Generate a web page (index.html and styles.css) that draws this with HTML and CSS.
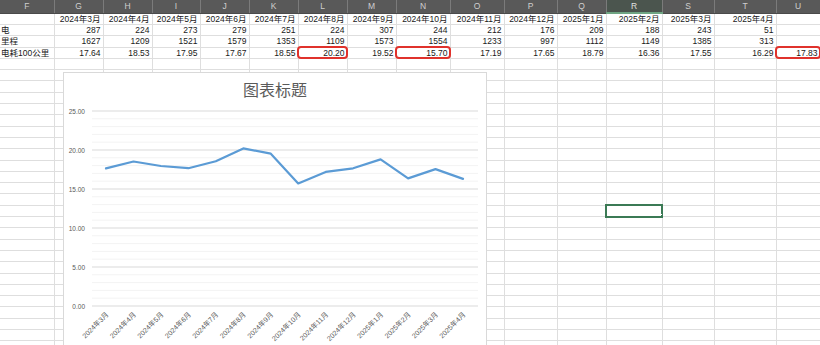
FILE: index.html
```html
<!DOCTYPE html>
<html lang="zh-CN">
<head>
  <meta charset="UTF-8" />
  <title>电耗统计</title>
  <link rel="stylesheet" href="styles.css">
</head>
<body>

  <div class="sheet">
    <table class="grid">
      <colgroup>
        <col style="width:54px"><col style="width:49px"><col style="width:49px"><col style="width:48px">
        <col style="width:49px"><col style="width:49px"><col style="width:49px"><col style="width:49px">
        <col style="width:54px"><col style="width:54px"><col style="width:53px"><col style="width:49px">
        <col style="width:56px"><col style="width:52px"><col style="width:62px"><col style="width:44px">
      </colgroup>
      <thead>
        <tr>
          <th>F</th><th>G</th><th>H</th><th>I</th><th>J</th><th>K</th><th>L</th><th>M</th>
          <th>N</th><th>O</th><th>P</th><th>Q</th><th class="current">R</th><th>S</th><th>T</th><th>U</th>
        </tr>
      </thead>
      <tbody>
        <tr>
          <td></td><td class="num">2024年3月</td><td class="num">2024年4月</td><td class="num">2024年5月</td>
          <td class="num">2024年6月</td><td class="num">2024年7月</td><td class="num">2024年8月</td><td class="num">2024年9月</td>
          <td class="num">2024年10月</td><td class="num">2024年11月</td><td class="num">2024年12月</td><td class="num">2025年1月</td>
          <td class="num">2025年2月</td><td class="num">2025年3月</td><td class="num">2025年4月</td><td></td>
        </tr>
        <tr>
          <td class="label">电</td><td class="num">287</td><td class="num">224</td><td class="num">273</td>
          <td class="num">279</td><td class="num">251</td><td class="num">224</td><td class="num">307</td>
          <td class="num">244</td><td class="num">212</td><td class="num">176</td><td class="num">209</td>
          <td class="num">188</td><td class="num">243</td><td class="num">51</td><td></td>
        </tr>
        <tr>
          <td class="label">里程</td><td class="num">1627</td><td class="num">1209</td><td class="num">1521</td>
          <td class="num">1579</td><td class="num">1353</td><td class="num">1109</td><td class="num">1573</td>
          <td class="num">1554</td><td class="num">1233</td><td class="num">997</td><td class="num">1112</td>
          <td class="num">1149</td><td class="num">1385</td><td class="num">313</td><td></td>
        </tr>
        <tr>
          <td class="label">电耗100公里</td><td class="num">17.64</td><td class="num">18.53</td><td class="num">17.95</td>
          <td class="num">17.67</td><td class="num">18.55</td><td class="num flag">20.20</td><td class="num">19.52</td>
          <td class="num flag">15.70</td><td class="num">17.19</td><td class="num">17.65</td><td class="num">18.79</td>
          <td class="num">16.36</td><td class="num">17.55</td><td class="num">16.29</td><td class="num flag">17.83</td>
        </tr>
        <tr><td></td><td></td><td></td><td></td><td></td><td></td><td></td><td></td><td></td><td></td><td></td><td></td><td></td><td></td><td></td><td></td></tr>
        <tr><td></td><td></td><td></td><td></td><td></td><td></td><td></td><td></td><td></td><td></td><td></td><td></td><td></td><td></td><td></td><td></td></tr>
        <tr><td></td><td></td><td></td><td></td><td></td><td></td><td></td><td></td><td></td><td></td><td></td><td></td><td></td><td></td><td></td><td></td></tr>
        <tr><td></td><td></td><td></td><td></td><td></td><td></td><td></td><td></td><td></td><td></td><td></td><td></td><td></td><td></td><td></td><td></td></tr>
        <tr><td></td><td></td><td></td><td></td><td></td><td></td><td></td><td></td><td></td><td></td><td></td><td></td><td></td><td></td><td></td><td></td></tr>
        <tr><td></td><td></td><td></td><td></td><td></td><td></td><td></td><td></td><td></td><td></td><td></td><td></td><td></td><td></td><td></td><td></td></tr>
        <tr><td></td><td></td><td></td><td></td><td></td><td></td><td></td><td></td><td></td><td></td><td></td><td></td><td></td><td></td><td></td><td></td></tr>
        <tr><td></td><td></td><td></td><td></td><td></td><td></td><td></td><td></td><td></td><td></td><td></td><td></td><td></td><td></td><td></td><td></td></tr>
        <tr><td></td><td></td><td></td><td></td><td></td><td></td><td></td><td></td><td></td><td></td><td></td><td></td><td></td><td></td><td></td><td></td></tr>
        <tr><td></td><td></td><td></td><td></td><td></td><td></td><td></td><td></td><td></td><td></td><td></td><td></td><td></td><td></td><td></td><td></td></tr>
        <tr><td></td><td></td><td></td><td></td><td></td><td></td><td></td><td></td><td></td><td></td><td></td><td></td><td></td><td></td><td></td><td></td></tr>
        <tr><td></td><td></td><td></td><td></td><td></td><td></td><td></td><td></td><td></td><td></td><td></td><td></td><td></td><td></td><td></td><td></td></tr>
        <tr><td></td><td></td><td></td><td></td><td></td><td></td><td></td><td></td><td></td><td></td><td></td><td></td><td></td><td></td><td></td><td></td></tr>
        <tr><td></td><td></td><td></td><td></td><td></td><td></td><td></td><td></td><td></td><td></td><td></td><td></td><td class="active"></td><td></td><td></td><td></td></tr>
        <tr><td></td><td></td><td></td><td></td><td></td><td></td><td></td><td></td><td></td><td></td><td></td><td></td><td></td><td></td><td></td><td></td></tr>
        <tr><td></td><td></td><td></td><td></td><td></td><td></td><td></td><td></td><td></td><td></td><td></td><td></td><td></td><td></td><td></td><td></td></tr>
        <tr><td></td><td></td><td></td><td></td><td></td><td></td><td></td><td></td><td></td><td></td><td></td><td></td><td></td><td></td><td></td><td></td></tr>
        <tr><td></td><td></td><td></td><td></td><td></td><td></td><td></td><td></td><td></td><td></td><td></td><td></td><td></td><td></td><td></td><td></td></tr>
        <tr><td></td><td></td><td></td><td></td><td></td><td></td><td></td><td></td><td></td><td></td><td></td><td></td><td></td><td></td><td></td><td></td></tr>
        <tr><td></td><td></td><td></td><td></td><td></td><td></td><td></td><td></td><td></td><td></td><td></td><td></td><td></td><td></td><td></td><td></td></tr>
        <tr><td></td><td></td><td></td><td></td><td></td><td></td><td></td><td></td><td></td><td></td><td></td><td></td><td></td><td></td><td></td><td></td></tr>
        <tr><td></td><td></td><td></td><td></td><td></td><td></td><td></td><td></td><td></td><td></td><td></td><td></td><td></td><td></td><td></td><td></td></tr>
        <tr><td></td><td></td><td></td><td></td><td></td><td></td><td></td><td></td><td></td><td></td><td></td><td></td><td></td><td></td><td></td><td></td></tr>
        <tr><td></td><td></td><td></td><td></td><td></td><td></td><td></td><td></td><td></td><td></td><td></td><td></td><td></td><td></td><td></td><td></td></tr>
        <tr><td></td><td></td><td></td><td></td><td></td><td></td><td></td><td></td><td></td><td></td><td></td><td></td><td></td><td></td><td></td><td></td></tr>
        <tr><td></td><td></td><td></td><td></td><td></td><td></td><td></td><td></td><td></td><td></td><td></td><td></td><td></td><td></td><td></td><td></td></tr>
      </tbody>
    </table>

    <!-- embedded chart, floats over the cells -->
    <div class="chart">
      <div class="chart-title">图表标题</div>
      <svg class="plot" width="422" height="260" viewBox="0 0 422 260">
        <g class="minor">
          <line x1="28" x2="414" y1="193.2" y2="193.2"/><line x1="28" x2="414" y1="185.4" y2="185.4"/>
          <line x1="28" x2="414" y1="177.6" y2="177.6"/><line x1="28" x2="414" y1="169.8" y2="169.8"/>
          <line x1="28" x2="414" y1="154.2" y2="154.2"/><line x1="28" x2="414" y1="146.4" y2="146.4"/>
          <line x1="28" x2="414" y1="138.6" y2="138.6"/><line x1="28" x2="414" y1="130.8" y2="130.8"/>
          <line x1="28" x2="414" y1="115.2" y2="115.2"/><line x1="28" x2="414" y1="107.4" y2="107.4"/>
          <line x1="28" x2="414" y1="99.6" y2="99.6"/><line x1="28" x2="414" y1="91.8" y2="91.8"/>
          <line x1="28" x2="414" y1="76.2" y2="76.2"/><line x1="28" x2="414" y1="68.4" y2="68.4"/>
          <line x1="28" x2="414" y1="60.6" y2="60.6"/><line x1="28" x2="414" y1="52.8" y2="52.8"/>
          <line x1="28" x2="414" y1="37.2" y2="37.2"/><line x1="28" x2="414" y1="29.4" y2="29.4"/>
          <line x1="28" x2="414" y1="21.6" y2="21.6"/><line x1="28" x2="414" y1="13.8" y2="13.8"/>
        </g>
        <g class="major">
          <line x1="28" x2="414" y1="6" y2="6"/>
          <line x1="28" x2="414" y1="45" y2="45"/>
          <line x1="28" x2="414" y1="84" y2="84"/>
          <line x1="28" x2="414" y1="123" y2="123"/>
          <line x1="28" x2="414" y1="162" y2="162"/>
          <line x1="28" x2="414" y1="201" y2="201"/>
        </g>
        <g class="y-labels">
          <text x="21" y="8.5">25.00</text>
          <text x="21" y="47.5">20.00</text>
          <text x="21" y="86.5">15.00</text>
          <text x="21" y="125.5">10.00</text>
          <text x="21" y="164.5">5.00</text>
          <text x="21" y="203.5">0.00</text>
        </g>
        <polyline class="series" points="42,63.4 69.5,56.5 96.9,61 124.4,63.2 151.8,56.3 179.3,43.4 206.8,48.7 234.2,78.5 261.7,66.9 289.1,63.3 316.6,54.4 344.1,73.4 371.5,64.1 399,73.9"/>
        <g class="x-labels">
          <text transform="translate(45 210) rotate(-45)">2024年3月</text>
          <text transform="translate(72.5 210) rotate(-45)">2024年4月</text>
          <text transform="translate(99.9 210) rotate(-45)">2024年5月</text>
          <text transform="translate(127.4 210) rotate(-45)">2024年6月</text>
          <text transform="translate(154.8 210) rotate(-45)">2024年7月</text>
          <text transform="translate(182.3 210) rotate(-45)">2024年8月</text>
          <text transform="translate(209.8 210) rotate(-45)">2024年9月</text>
          <text transform="translate(237.2 210) rotate(-45)">2024年10月</text>
          <text transform="translate(264.7 210) rotate(-45)">2024年11月</text>
          <text transform="translate(292.1 210) rotate(-45)">2024年12月</text>
          <text transform="translate(319.6 210) rotate(-45)">2025年1月</text>
          <text transform="translate(347.1 210) rotate(-45)">2025年2月</text>
          <text transform="translate(374.5 210) rotate(-45)">2025年3月</text>
          <text transform="translate(402 210) rotate(-45)">2025年4月</text>
        </g>
      </svg>
    </div>
  </div>

</body>
</html>
```
FILE: styles.css
```css
body {
  margin: 0;
  background: #fff;
  font-family: "Liberation Sans", "Noto Sans CJK SC", sans-serif;
  overflow: hidden;
}
.sheet {
  position: relative;
  width: 820px;
  height: 345px;
  overflow: hidden;
}
.grid {
  border-collapse: collapse;
  table-layout: fixed;
  width: 820px;
  font-size: 8.5px;
  color: #1a1a1a;
}
.grid th {
  height: 12px;
  padding: 0;
  background: #595959;
  color: #cfcfcf;
  font-weight: normal;
  font-size: 8.5px;
  line-height: 11px;
  text-align: center;
  border-right: 1px solid #7b7b7b;
  border-bottom: 1px solid #4a4a4a;
}
.grid th.current {
  background: #4b554e;
  color: #e0e0e0;
  border-bottom: 2px solid #6fa583;
}
.grid tbody tr {
  height: 11.3px;
}
.grid td {
  padding: 0 2px 0 1px;
  line-height: 10px;
  white-space: nowrap;
  overflow: hidden;
  border-right: 1px solid #dedede;
  border-bottom: 1px solid #dedede;
}
.grid td.num {
  text-align: right;
}
.grid td.label {
  text-align: left;
}
.grid td.flag {
  outline: 2px solid #e0322c;
  outline-offset: -1px;
  border-radius: 3px;
}
.grid td.active {
  position: relative;
  outline: 2px solid #3b7a55;
  outline-offset: -1px;
}
.grid td.active::after {
  content: "";
  position: absolute;
  right: -3px;
  bottom: -3px;
  width: 3px;
  height: 3px;
  background: #3b7a55;
  border: 1px solid #fff;
}

/* chart object */
.chart {
  position: absolute;
  left: 63px;
  top: 72px;
  width: 424px;
  height: 292px;
  box-sizing: border-box;
  background: #fff;
  border: 1px solid #d9d9d9;
}
.chart-title {
  height: 31px;
  padding-top: 1px;
  text-align: center;
  font-family: "Noto Sans CJK SC", sans-serif;
  font-size: 16px;
  line-height: 30px;
  color: #5a5a5a;
}
.plot {
  display: block;
}
.plot .minor line {
  stroke: #f3f3f3;
  stroke-width: 1;
}
.plot .major line {
  stroke: #d9d9d9;
  stroke-width: 1;
}
.plot text {
  font-family: "Liberation Sans", "Noto Sans CJK SC", sans-serif;
  font-size: 6.5px;
  fill: #595959;
}
.plot .y-labels text {
  text-anchor: end;
}
.plot .x-labels text {
  font-size: 7px;
  text-anchor: end;
}
.series {
  fill: none;
  stroke: #5b9bd5;
  stroke-width: 2.2;
  stroke-linejoin: round;
  stroke-linecap: round;
}
```
